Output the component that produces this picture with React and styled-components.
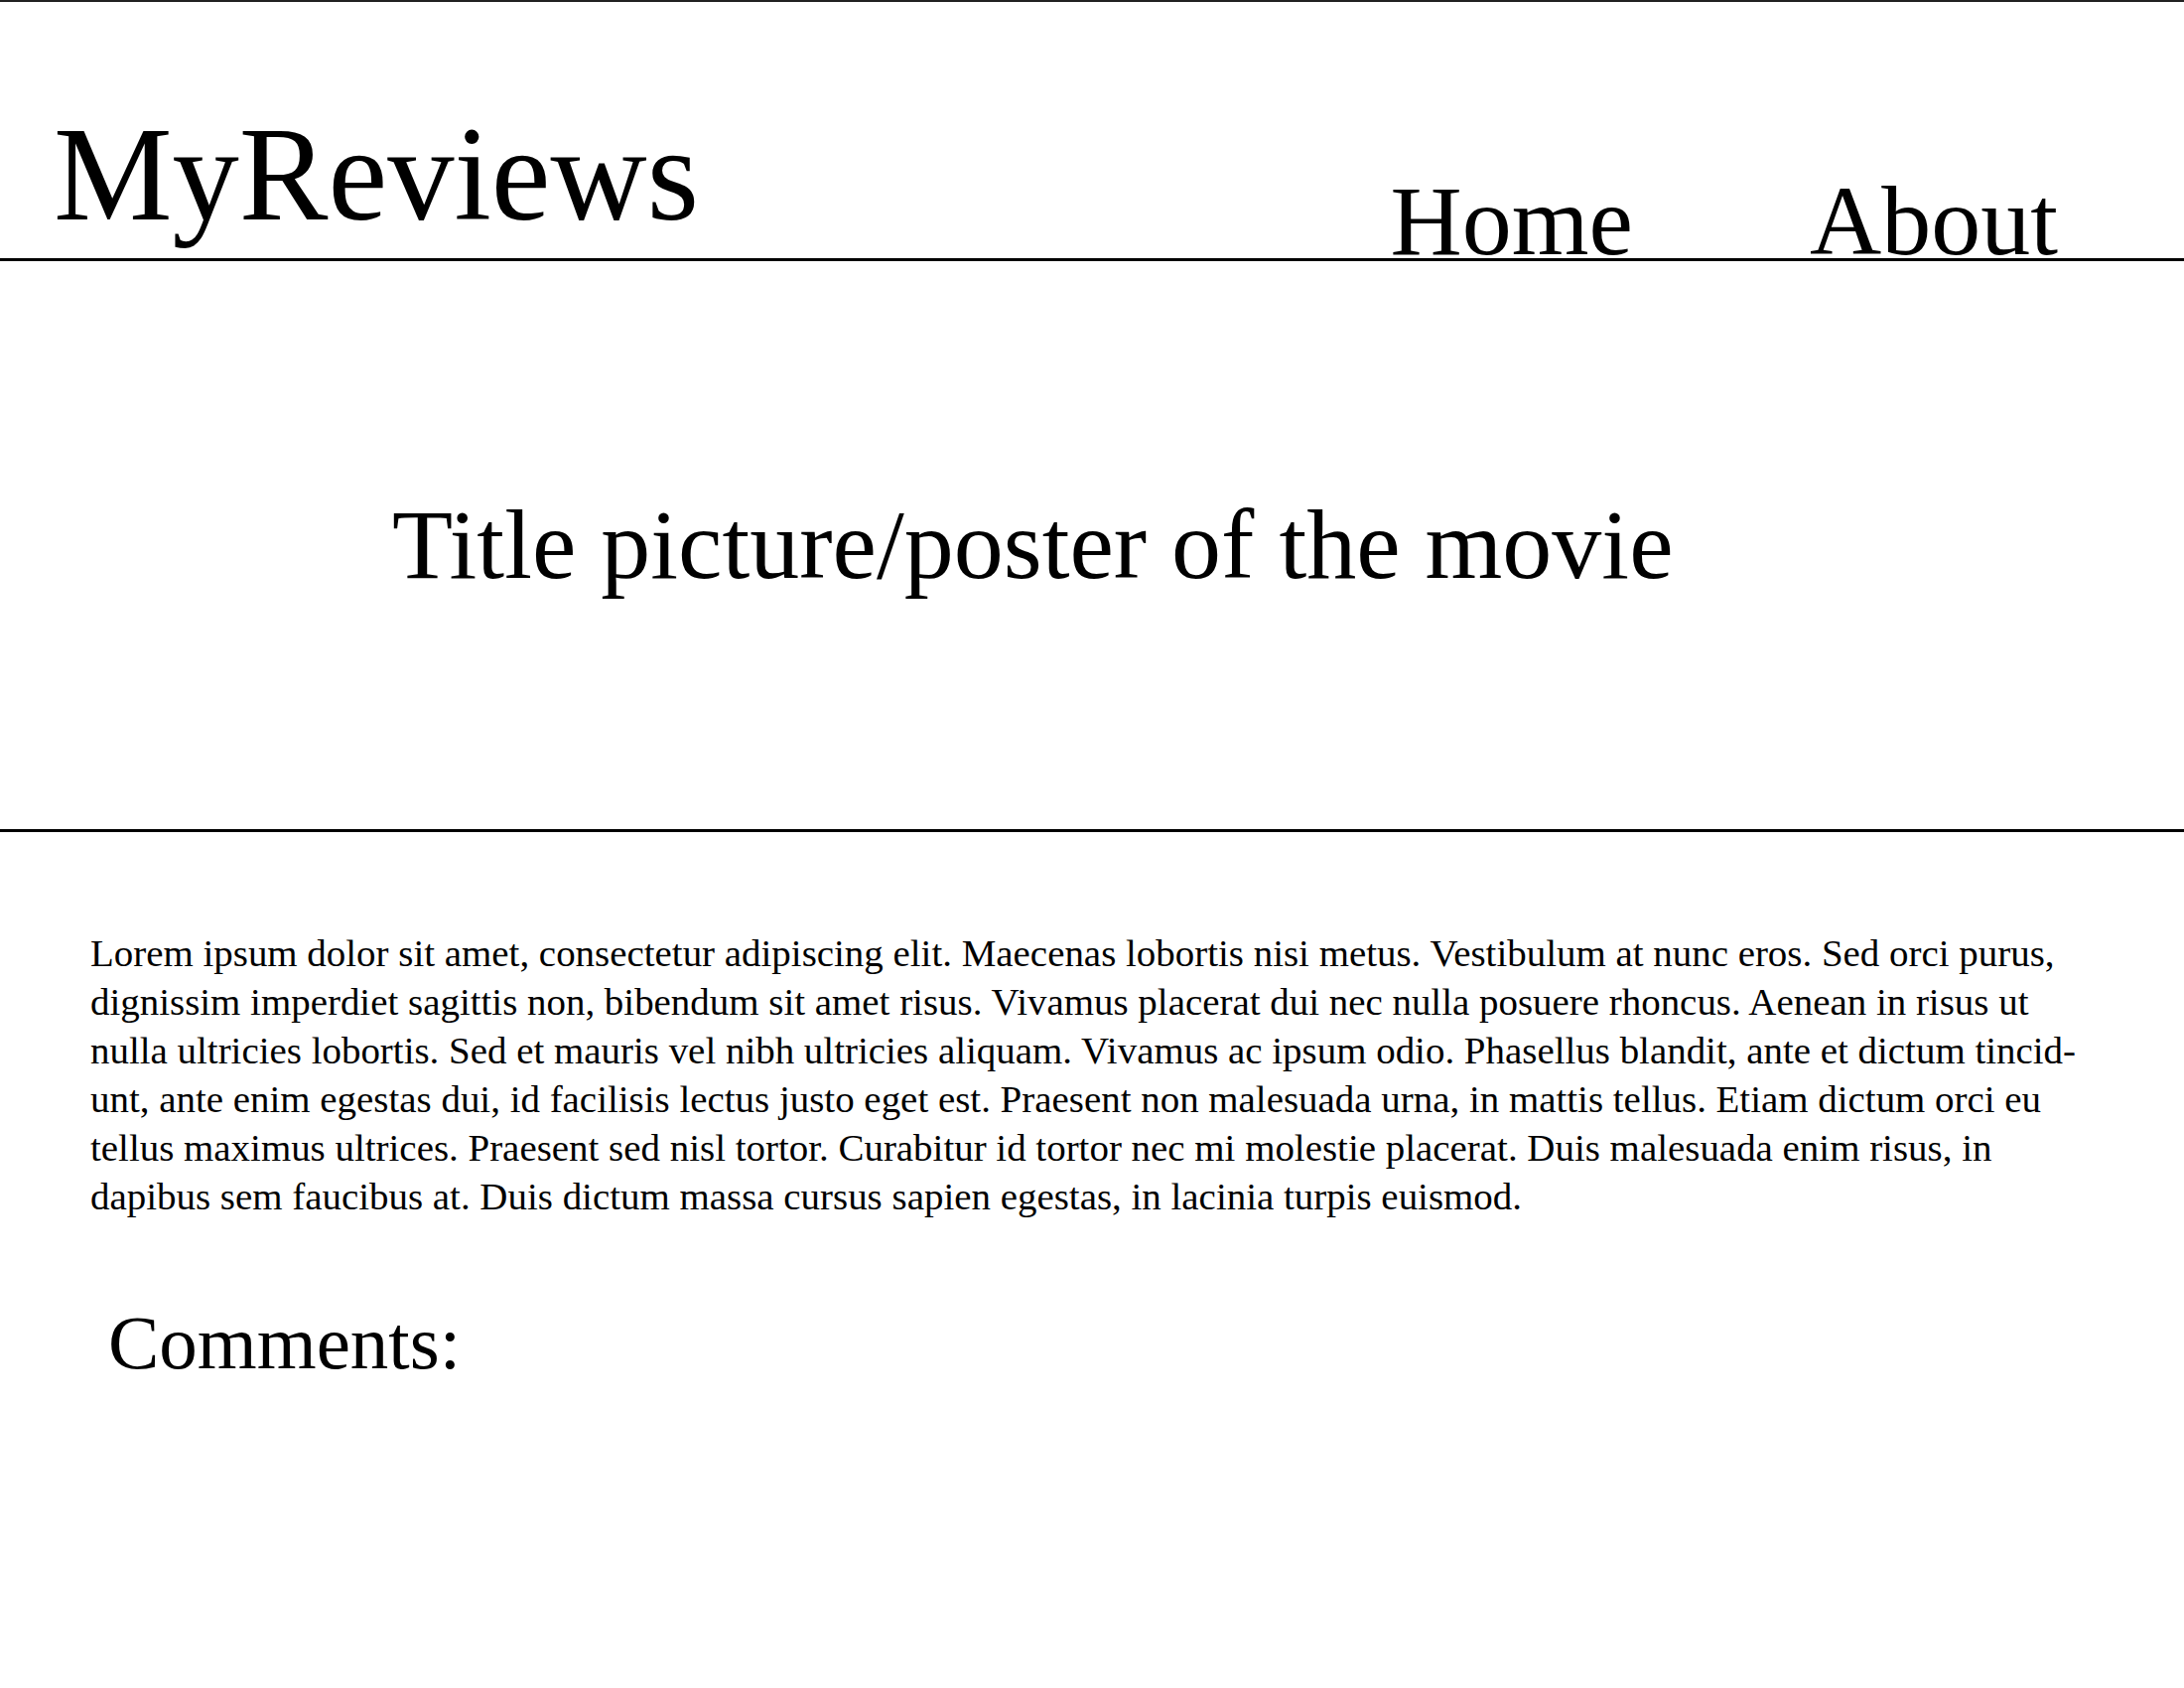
import React from "react";
import styled, { createGlobalStyle } from "styled-components";

const Global = createGlobalStyle`
  html, body { margin: 0; padding: 0; background: #fff; }
  body { font-family: "Liberation Serif", "Times New Roman", serif; color: #000; }
`;

const Page = styled.div`
  width: 2200px;
  min-height: 1700px;
  border-top: 2px solid #222;
  box-sizing: border-box;
`;

const Header = styled.header`
  display: flex;
  align-items: flex-end;
  justify-content: space-between;
  height: 261px;
  box-sizing: border-box;
  padding: 0 127px 0 54px;
  border-bottom: 3px solid #000;
`;

const Logo = styled.div`
  font-size: 134.5px;
  line-height: 1;
  margin-bottom: 17px;
`;

const Nav = styled.nav`
  display: flex;
  gap: 178px;
  margin-bottom: -13px;
`;

const NavItem = styled.a`
  font-size: 100px;
  line-height: 1;
  color: #000;
  text-decoration: none;
`;

const Hero = styled.section`
  display: flex;
  align-items: center;
  height: 575px;
  box-sizing: border-box;
  padding-left: 395px;
  border-bottom: 3px solid #000;
`;

const HeroTitle = styled.h1`
  margin: 0;
  font-weight: 400;
  font-size: 100px;
  line-height: 1;
`;

const Content = styled.main`
  padding: 97px 100px 0 91px;
`;

const Paragraph = styled.p`
  margin: 0;
  font-size: 38.93px;
  line-height: 49px;
`;

const CommentsTitle = styled.h2`
  margin: 85px 0 0 18px;
  font-weight: 400;
  font-size: 77px;
  line-height: 1;
`;

export default function App() {
  return (
    <>
      <Global />
      <Page>
        <Header>
          <Logo>MyReviews</Logo>
          <Nav>
            <NavItem>Home</NavItem>
            <NavItem>About</NavItem>
          </Nav>
        </Header>
        <Hero>
          <HeroTitle>Title picture/poster of the movie</HeroTitle>
        </Hero>
        <Content>
          <Paragraph>
            Lorem ipsum dolor sit amet, consectetur adipiscing elit. Maecenas lobortis nisi metus. Vestibulum at nunc eros. Sed orci purus, dignissim imperdiet sagittis non, bibendum sit amet risus. Vivamus placerat dui nec nulla posuere rhoncus. Aenean in risus ut nulla ultricies lobortis. Sed et mauris vel nibh ultricies aliquam. Vivamus ac ipsum odio. Phasellus blandit, ante et dictum tincid{"\u00AD"}unt, ante enim egestas dui, id facilisis lectus justo eget est. Praesent non malesuada urna, in mattis tellus. Etiam dictum orci eu tellus maximus ultrices. Praesent sed nisl tortor. Curabitur id tortor nec mi molestie placerat. Duis malesuada enim risus, in dapibus sem faucibus at. Duis dictum massa cursus sapien egestas, in lacinia turpis euismod.
          </Paragraph>
          <CommentsTitle>Comments:</CommentsTitle>
        </Content>
      </Page>
    </>
  );
}
